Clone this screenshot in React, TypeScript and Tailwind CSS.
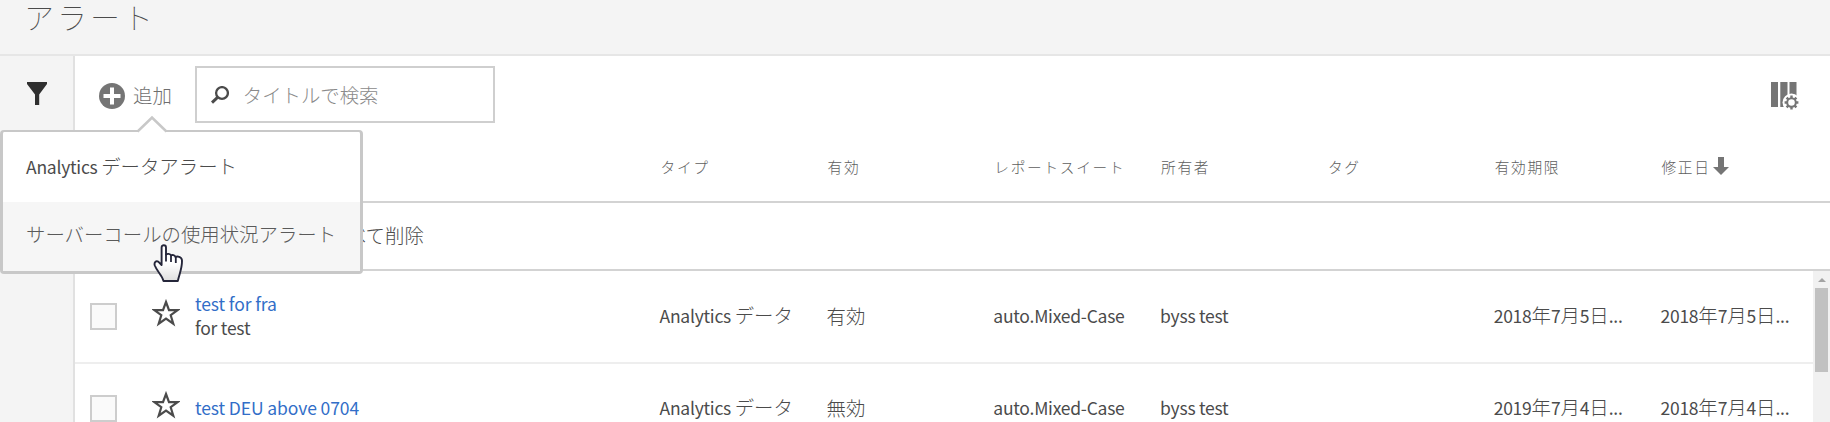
import React from 'react';

type Alert = {
  name: string;
  note?: string;
  type: string;
  status: string;
  suite: string;
  owner: string;
  tag: string;
  expires: string;
  modified: string;
};

const alerts: Alert[] = [
  {
    name: 'test for fra',
    note: 'for test',
    type: 'Analytics データ',
    status: '有効',
    suite: 'auto.Mixed-Case',
    owner: 'byss test',
    tag: '',
    expires: '2018年7月5日...',
    modified: '2018年7月5日...',
  },
  {
    name: 'test DEU above 0704',
    type: 'Analytics データ',
    status: '無効',
    suite: 'auto.Mixed-Case',
    owner: 'byss test',
    tag: '',
    expires: '2019年7月4日...',
    modified: '2018年7月4日...',
  },
];

const columns = ['タイプ', '有効', 'レポートスイート', '所有者', 'タグ', '有効期限', '修正日'];

// Latin runs are drawn smaller and heavier than the Japanese runs beside them.
function Mixed({ text }: { text: string }) {
  const parts = text.match(/[\x00-\x7f]+|[^\x00-\x7f]+/g) ?? [];
  return (
    <>
      {parts.map((part, i) =>
        /[\x00-\x7f]/.test(part) ? (
          <span key={i} className="text-[17.5px] tracking-[-0.25px]">{part}</span>
        ) : (
          <span key={i} className="font-light">{part}</span>
        ),
      )}
    </>
  );
}

function FilterIcon() {
  return (
    <svg width="20" height="24" viewBox="0 0 20 24" fill="#2f2f2f">
      <path d="M0 0H20V2L12.2 12.5V23H8V12.5L0 2Z" />
    </svg>
  );
}

function AddIcon() {
  return (
    <svg className="relative top-px" width="26" height="26" viewBox="0 0 26 26">
      <circle cx="13" cy="13" r="13" fill="#757575" />
      <path d="M13 4.5V21.5M4.5 13H21.5" stroke="#fff" strokeWidth="4" />
    </svg>
  );
}

function SearchIcon() {
  return (
    <svg width="18" height="18" viewBox="0 0 18 18" fill="none" stroke="#4b4b4b">
      <circle cx="11" cy="7" r="5.9" strokeWidth="2.3" />
      <path d="M6.8 11.2L1 16.6" strokeWidth="3" />
    </svg>
  );
}

function ColumnsIcon() {
  return (
    <svg className="relative top-px" width="28" height="28" viewBox="0 0 28 28" fill="#757575">
      <path d="M0 0H7V25H0ZM9.3 0H16.5V25H9.3ZM18.5 0H25.5V14H18.5Z" />
      <circle cx="20.5" cy="20.5" r="9" fill="#fff" />
      <circle cx="20.5" cy="20.5" r="4.3" fill="none" stroke="#757575" strokeWidth="2" />
      <path
        d="M20.5 13.6V16.4M20.5 24.6V27.4M13.6 20.5H16.4M24.6 20.5H27.4M15.6 15.6L17.6 17.6M23.4 23.4L25.4 25.4M15.6 25.4L17.6 23.4M23.4 17.6L25.4 15.6"
        stroke="#757575"
        strokeWidth="2.4"
      />
    </svg>
  );
}

function StarIcon() {
  return (
    <svg width="28" height="28" viewBox="0 0 28 28" fill="none" stroke="#4b4b4b" strokeWidth="2.2">
      <path d="M14 3L17 11.1H25.6L18.7 16.2L21.3 24.7L14 19.6L6.7 24.7L9.3 16.2L2.4 11.1H11Z" />
    </svg>
  );
}

function HandPointer() {
  return (
    <svg width="32" height="40" viewBox="0 0 32 40">
      <defs>
        <linearGradient id="hand" x1="0" y1="0" x2="0" y2="1">
          <stop offset="0.5" stopColor="#fff" />
          <stop offset="1" stopColor="#dedede" />
        </linearGradient>
      </defs>
      <path
        d="M8.6 3.4C8.6 1.8 9.6 1.3 10.8 1.3S13 1.8 13 3.4V10.6C14 9.5 17.3 9.6 18 11.5C19.2 10.4 21.8 11 22.6 13.1C24 12 28.8 12.4 29 16.5C29.2 24 27 28 24.8 37H10.5C9 31 4 27.5 1.8 21.5C0.8 18.5 3 16 5.5 17.8L8.6 21Z"
        fill="url(#hand)"
        stroke="#25263a"
        strokeWidth="1.9"
        strokeLinejoin="round"
      />
      <path d="M13 10V17.5M18 11.5V18M22.8 13V19" stroke="#25263a" strokeWidth="1.8" />
    </svg>
  );
}

function AddMenu() {
  return (
    <div className="absolute left-0 top-[130px] z-10 h-[144px] w-[363px] rounded-[4px] border-[3px] border-t-2 border-[#c8c8c8] bg-white text-[19.4px] text-[#4b4b4b]">
      <div className="h-[70px] whitespace-nowrap pl-[23px] leading-[67px]">
        <Mixed text="Analytics データアラート" />
      </div>
      <div className="h-[69px] whitespace-nowrap bg-[#f6f6f6] pl-[23px] leading-[64px] text-[#5a5a5a]">
        <Mixed text="サーバーコールの使用状況アラート" />
      </div>
      <svg className="absolute -top-[17px] left-[134px]" width="30" height="18" viewBox="0 0 30 18">
        <path d="M1 18V16L15 3L29 16V18Z" fill="#fff" />
        <path d="M0.5 16.5L15 2.5L29.5 16.5" fill="none" stroke="#c8c8c8" strokeWidth="2.6" />
      </svg>
      <div className="absolute left-[150px] top-[112px]">
        <HandPointer />
      </div>
    </div>
  );
}

const grid =
  'grid grid-cols-[120px_464.5px_167px_166.8px_166.8px_166.8px_166.8px_166.8px_1fr]';

function Row({ alert }: { alert: Alert }) {
  return (
    <div className={`${grid} h-[91px] shrink-0 items-center whitespace-nowrap border-b-2 border-[#eeeeee] text-[19.4px] leading-6 first:h-[93px]`}>
      <div className="flex items-center pl-[15px]">
        <span className="size-[27px] border-2 border-[#cdcdcd] bg-[#fafafa]" />
        <span className="-mt-[7px] ml-[35px]">
          <StarIcon />
        </span>
      </div>
      <div className="-mt-[2px] tracking-normal">
        <div className="text-[#326ec8]"><span className="text-[17.5px] tracking-[-0.1px]">{alert.name}</span></div>
        {alert.note && <div className="-mt-px"><Mixed text={alert.note} /></div>}
      </div>
      <div className="-mt-[2px]"><Mixed text={alert.type} /></div>
      <div className="-mt-[2px]"><Mixed text={alert.status} /></div>
      <div className="-mt-[2px]"><Mixed text={alert.suite} /></div>
      <div className="-mt-[2px]"><Mixed text={alert.owner} /></div>
      <div>{alert.tag}</div>
      <div className="-mt-[2px]"><Mixed text={alert.expires} /></div>
      <div className="-mt-[2px]"><Mixed text={alert.modified} /></div>
    </div>
  );
}

export default function App() {
  return (
    <div className="relative flex h-[422px] w-[1830px] flex-col overflow-hidden bg-white font-['Noto_Sans_CJK_JP',sans-serif] text-[#4b4b4b]">
      <header className="h-[56px] shrink-0 border-b-2 border-[#e6e6e6] bg-[#f4f4f4]">
        <h1 className="pl-[24px] text-[30px] font-thin leading-[32px] tracking-[3px] text-[#4b4b4b]">アラート</h1>
      </header>
      <div className="flex min-h-0 flex-1">
        <aside className="w-[75px] shrink-0 border-r-2 border-[#e1e1e1] bg-[#f4f4f4] pl-[27px] pt-[26px]">
          <FilterIcon />
        </aside>
        <main className="flex min-w-0 flex-1 flex-col">
          <div className="flex h-[77px] shrink-0 items-center pt-[1px]">
            <button className="ml-[24px] flex items-center gap-[8px] text-[19.4px] font-light text-[#6e6e6e]">
              <AddIcon />
              追加
            </button>
            <div className="-mt-[1px] ml-[23px] flex h-[57px] w-[300px] items-center border-2 border-[#cfcfcf] pl-[14px]">
              <SearchIcon />
              <span className="ml-[14px] text-[19.4px] font-light text-[#8a8a8a]">タイトルで検索</span>
            </div>
            <div className="ml-auto mr-[31px]">
              <ColumnsIcon />
            </div>
          </div>
          <div className={`${grid} h-[70px] shrink-0 items-center border-b-2 border-[#d3d3d3] text-[14.7px] font-light tracking-[1.7px] text-[#5e5e5e]`}>
            <span className="col-span-2" />
            {columns.map((label) => (
              <span key={label} className="flex items-center whitespace-nowrap pl-[1px]">
                {label}
                {label === '修正日' && (
                  <svg className="-mt-[2px] ml-[2px]" width="16" height="18" viewBox="0 0 16 18" fill="#757575">
                    <path d="M5 0H11V10H16L8 18L0 10H5Z" />
                  </svg>
                )}
              </span>
            ))}
          </div>
          <div className="flex h-[68px] shrink-0 items-center border-b-2 border-[#d3d3d3] pb-[2px] pl-[272px] text-[19.4px] font-light">
            べて削除
          </div>
          <div className="flex min-h-0 flex-1 overflow-hidden">
            <div className="flex min-w-0 flex-1 flex-col overflow-hidden">
              {alerts.map((alert) => (
                <Row key={alert.name} alert={alert} />
              ))}
            </div>
            <div className="flex w-[17px] shrink-0 flex-col items-center bg-[#f1f1f1]">
              <svg className="h-[17px] shrink-0" width="8" height="17" viewBox="0 0 8 17" fill="#a3a3a3">
                <path d="M0 11L4 7L8 11Z" />
              </svg>
              <div className="h-[84px] w-[13px] bg-[#c1c1c1]" />
            </div>
          </div>
        </main>
      </div>
      <AddMenu />
    </div>
  );
}
